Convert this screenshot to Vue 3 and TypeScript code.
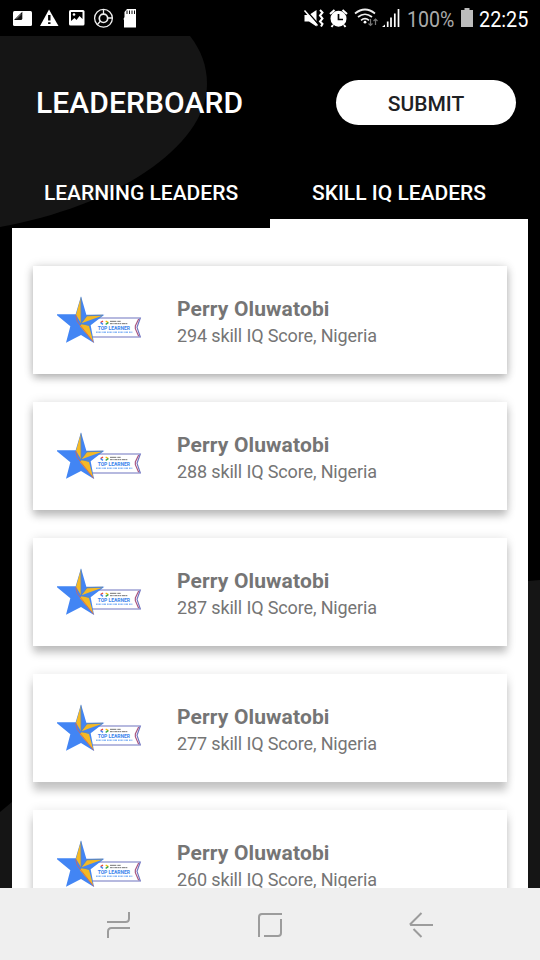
<script setup lang="ts">
interface Leader {
  name: string
  score: number
  country: string
}

const leaders: Leader[] = [294, 288, 287, 277, 260].map((score) => ({
  name: 'Perry Oluwatobi',
  score,
  country: 'Nigeria',
}))
</script>

<template>
  <div class="screen">
    <svg class="backdrop" viewBox="0 0 540 960" aria-hidden="true">
      <path d="M0 36H190C201 50 207 66 207 84C207 148 112 207 0 227Z" />
      <path d="M0 812L12 802V888H0Z" />
      <path d="M528 581L540 580V888H528Z" />
    </svg>

    <div class="status">
      <svg class="status-left" viewBox="0 0 140 36">
        <g fill="#fff">
          <path d="M14.500 11H30.500Q32 11 32 12.500V24.500Q32 26 30.500 26H14.500Q13 26 13 24.500V12.500Q13 11 14.500 11Z" />
          <path d="M49 9.500L58.500 26H40Z" />
          <path d="M70.500 10H83Q84.500 10 84.500 11.500V24Q84.500 25.500 83 25.500H70.500Q69 25.500 69 24V11.500Q69 10 70.500 10Z" />
          <path d="M127 9H136V27.500H124V20L123.500 19L124.500 17V12Z" />
        </g>
        <path d="M14 20L22.300 11.800V18.500Q22.300 20 20.700 20Z" fill="#111" />
        <path d="M16.500 18.800L21 14.300" stroke="#aaa" stroke-width="0.800" />
        <path d="M49.300 15V20.500M49.300 22.200V24" stroke="#000" stroke-width="2.400" />
        <path d="M71 12H82.500V19L79.500 16L76.500 20L74.500 18L71 21Z" fill="#000" />
        <circle cx="74" cy="14.500" r="1.300" fill="#fff" />
        <path d="M127 10.500V14M129.500 10.500V14M132 10.500V14M134.500 10.500V14" stroke="#111" stroke-width="1" />
        <g fill="none" stroke="#eee" stroke-width="1.300">
          <circle cx="103.500" cy="18.300" r="8.900" />
          <circle cx="103.500" cy="18.300" r="4.200" stroke-width="1.700" />
          <path d="M103.500 9.500V14M107.500 18H112.500M100.500 21L97 25" />
        </g>
      </svg>
      <div class="status-right">
        <svg class="status-icons" viewBox="300 0 104 36">
          <path d="M304.500 15H309L316.500 10V26.500L309 21.500H304.500Z" fill="#fff" />
          <path d="M304.500 8.500L319 25" stroke="#000" stroke-width="1.500" />
          <path d="M304.500 10.500L317.500 25.500" stroke="#fff" stroke-width="1.500" />
          <path d="M320 10L322.500 12.500L320 15.500L322.500 18.500L320 21.500L322.500 24L321 26.500" fill="none" stroke="#fff" stroke-width="2" />
          <circle cx="338.500" cy="18.700" r="8" fill="#fff" />
          <path d="M330 14L334.500 10M342.500 10L347 14M333 25L331.500 27M344 25L345.500 27" stroke="#fff" stroke-width="2" />
          <path d="M338.500 14V19.500H343" stroke="#000" stroke-width="1.700" fill="none" />
          <g fill="none" stroke="#eee" stroke-width="1.700">
            <path d="M355 13.500Q365 5.500 375 13.500M358 17Q365 11.500 372 17M361 20.300Q365 17 369 20.300" />
          </g>
          <circle cx="365" cy="22.200" r="1.400" fill="#fff" />
          <path d="M370.500 19V25.500M368.500 23.500L370.500 25.500L372.500 23.500M375.500 25V19M373.500 21L375.500 19L377.500 21" fill="none" stroke="#777" stroke-width="1.200" />
          <path d="M382 27L385 24.500V27Z" fill="#fff" />
          <path d="M387.700 21.500V27M391 17.500V27M394.800 13.500V27M398.500 9V27" stroke="#fff" stroke-width="1.700" />
        </svg>
        <span class="percent">100%</span>
        <svg class="battery" viewBox="0 0 12 20"><path d="M3.500 0H8.500V2H12V19H0V2H3.500Z" fill="#bcbcbc" /></svg>
        <span class="clock">22:25</span>
      </div>
    </div>

    <header class="header">
      <h1 class="title">LEADERBOARD</h1>
      <button class="submit">SUBMIT</button>
    </header>

    <nav class="tabs">
      <div class="tab">LEARNING LEADERS</div>
      <div class="tab active">SKILL IQ LEADERS</div>
    </nav>

    <main class="panel">
      <article v-for="(leader, i) in leaders" :key="leader.score" class="card" :class="'depth-' + i">
        <svg class="badge" viewBox="0 0 300 180">
          <path d="M130 84H272L258 112L272 141H120Z" fill="#fff" />
          <path d="M140 84H271L261 112L271 141H124" fill="none" stroke="#6f74c0" stroke-width="3.500" />
          <path d="M266 87L256 108V116L266 139" fill="none" stroke="#a8547f" stroke-width="3.500" />
          <g transform="translate(1 2)">
            <path d="M92 17L108 72H162L121 104L131 157L92 133L47 156L60 107L20 74V71H76Z" fill="#4285f4" />
            <path d="M91 22L77 72L92 98ZM156 75L110 77L94 98L120 88ZM95 100L116 106L129 153L88 106Z" fill="#f4b925" />
            <path d="M92 20V98L110 75L158 73M94 100L119 103" fill="none" stroke="#6f8794" stroke-width="2" />
            <path d="M76 73L81 93L130 155" fill="none" stroke="#d86450" stroke-width="2.500" />
          </g>
          <path d="M159 93L152 98" stroke="#ea4335" stroke-width="4" />
          <path d="M152 98L159 103" stroke="#4285f4" stroke-width="4" />
          <path d="M167 93L175 98" stroke="#fbbc04" stroke-width="4" />
          <path d="M175 98L167 103" stroke="#34a853" stroke-width="4" />
          <path d="M180 94H199M202 94H212" stroke="#777" stroke-width="3" />
          <path d="M180 101H233" stroke="#777" stroke-width="3" stroke-dasharray="6 1 4 2 9 1" />
          <text x="143" y="119" textLength="97" lengthAdjust="spacingAndGlyphs">TOP LEARNER</text>
          <path d="M138 127H247" stroke="#8bb9f7" stroke-width="4.500" stroke-dasharray="5 2 7 3 3 2 8 3" />
        </svg>
        <div class="info">
          <div class="name">{{ leader.name }}</div>
          <div class="detail">{{ leader.score }} skill IQ Score, {{ leader.country }}</div>
        </div>
      </article>
    </main>

    <footer class="navigation">
      <svg viewBox="0 0 36 36"><path d="M6 16H24.500Q28 16 28 12.500V6M7 32V25.500Q7 22 10.500 22H29" /></svg>
      <svg viewBox="0 0 36 36"><path d="M7 31V11Q7 8 10 8H30M29 13V27Q29 30 26 30H12" /></svg>
      <svg viewBox="0 0 36 36"><path d="M30 19H8L7.500 18L18.500 7M10.500 23L18.500 31" /></svg>
    </footer>
  </div>
</template>

<style>
body {
  margin: 0;
  background: #000;
}
</style>

<style scoped>
.screen {
  position: relative;
  display: flex;
  flex-direction: column;
  width: 540px;
  height: 960px;
  overflow: hidden;
  background: #000;
  color: #fff;
  font-family: Roboto, sans-serif;
}
.backdrop {
  position: absolute;
  inset: 0;
  fill: #151515;
}
.status {
  position: relative;
  display: flex;
  justify-content: space-between;
  flex: 0 0 36px;
  height: 36px;
}
.status-left {
  width: 140px;
  height: 36px;
}
.status-right {
  display: flex;
  align-items: center;
  width: 240px;
  height: 36px;
}
.status-icons {
  flex: none;
  width: 104px;
  height: 36px;
}
.percent,
.clock {
  flex: none;
  box-sizing: border-box;
  height: 36px;
  padding-top: 3px;
  font-size: 22.5px;
  line-height: 33px;
  white-space: nowrap;
  transform-origin: left;
}
.percent {
  width: 54px;
  margin-left: 3px;
  color: #aaa;
  transform: scaleX(0.87);
}
.clock {
  margin-left: 6px;
  transform: scaleX(0.88);
}
.battery {
  flex: none;
  width: 12px;
  height: 20px;
}
.header {
  position: relative;
  display: flex;
  align-items: center;
  justify-content: space-between;
  height: 45px;
  padding: 44px 24px 0 36px;
}
.title {
  margin: 0;
  font-size: 30px;
  font-weight: 500;
  line-height: 45px;
  letter-spacing: 0.1px;
}
.submit {
  width: 180px;
  height: 45px;
  padding: 3px 0 0;
  border: 0;
  border-radius: 23px;
  background: #fff;
  color: #202124;
  font: 500 21px Roboto, sans-serif;
}
.tabs {
  position: relative;
  display: flex;
  height: 63px;
  padding: 40px 12px 0;
}
.tab {
  flex: 1;
  text-align: center;
  font-size: 21px;
  font-weight: 500;
  line-height: 56px;
  white-space: nowrap;
}
.tab.active {
  box-sizing: border-box;
  height: 63px;
  border-bottom: 9px solid #fff;
}
.panel {
  position: relative;
  display: flex;
  flex-direction: column;
  gap: 28px;
  height: 622px;
  margin: 0 12px;
  padding: 38px 21px 0;
  overflow: hidden;
  background: #fff;
}
.card {
  display: flex;
  flex: 0 0 108px;
  background: #fff;
  box-shadow: 0 4px 8px rgba(0, 0, 0, 0.25), 0 0 10px rgba(0, 0, 0, 0.12);
}
.depth-1 {
  box-shadow: 0 6px 8px rgba(0, 0, 0, 0.23), 0 0 10px rgba(0, 0, 0, 0.11);
}
.depth-2 {
  box-shadow: 0 7px 8px rgba(0, 0, 0, 0.22), 0 0 10px rgba(0, 0, 0, 0.1);
}
.depth-3,
.depth-4 {
  box-shadow: 0 9px 8px rgba(0, 0, 0, 0.2), 0 0 10px rgba(0, 0, 0, 0.09);
}
.badge {
  flex: none;
  width: 100px;
  height: 60px;
  margin: 24px 27px 0 17px;
}
.badge text {
  font: 700 15px Roboto, sans-serif;
  fill: #3883ec;
}
.info {
  padding-top: 29px;
  color: #757575;
  white-space: nowrap;
}
.name {
  font-size: 21px;
  font-weight: 700;
  line-height: 28px;
  letter-spacing: 0.13px;
}
.detail {
  font-size: 18px;
  line-height: 26px;
  letter-spacing: -0.14px;
}
.navigation {
  position: relative;
  display: flex;
  align-items: center;
  gap: 115px;
  height: 72px;
  padding: 0 0 0 101px;
  background: #efefef;
}
.navigation svg {
  width: 36px;
  height: 36px;
  fill: none;
  stroke: #9c9c9c;
  stroke-width: 2;
}
</style>
